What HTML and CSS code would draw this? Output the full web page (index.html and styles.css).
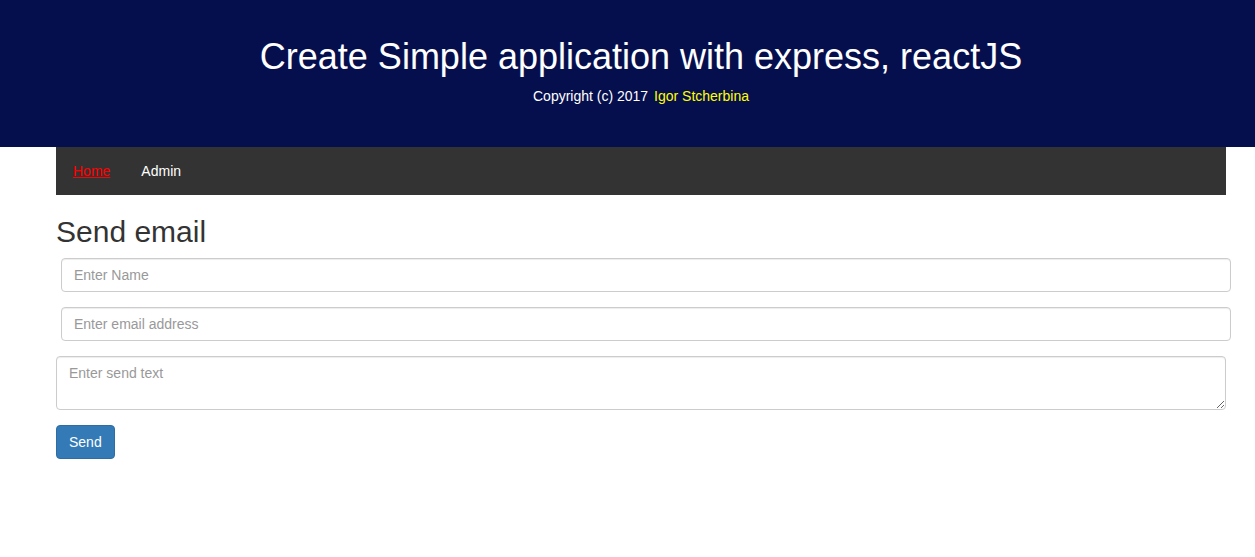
FILE: index.html
```html
<!DOCTYPE html>
<html>
<head>
<meta charset="utf-8">
<link rel="stylesheet" href="styles.css">
</head>
<body>
<header class="hero">
  <h1 class="hero-title">Create Simple application with express, reactJS</h1>
  <p class="hero-copy">Copyright (c) 2017 <a class="author" href="#">Igor Stcherbina</a></p>
</header>
<div class="container">
  <nav class="navbar">
    <a class="nav-link active" href="#">Home</a>
    <a class="nav-link" href="#">Admin</a>
  </nav>
  <h2 class="page-title">Send email</h2>
  <form class="form">
    <div class="form-group inset">
      <input class="form-control" type="text" placeholder="Enter Name">
    </div>
    <div class="form-group inset">
      <input class="form-control" type="email" placeholder="Enter email address">
    </div>
    <div class="form-group">
      <textarea class="form-control textarea" placeholder="Enter send text"></textarea>
    </div>
    <button class="btn" type="button">Send</button>
  </form>
</div>
</body>
</html>
```
FILE: styles.css
```css
* { box-sizing: border-box; }
body {
  margin: 0;
  font-family: "Liberation Sans", Arial, sans-serif;
  font-size: 14px;
  line-height: 1.42857;
  color: #333;
  background: #fff;
}
.hero {
  background: #060f4e;
  height: 147px;
  padding-top: 37px;
  padding-left: 27px;
  text-align: center;
  color: #fff;
}
.hero-title {
  margin: 0;
  font-size: 36px;
  font-weight: normal;
  line-height: 1.1;
}
.hero-copy {
  margin: 10px 0 0;
  font-size: 14px;
}
.author {
  margin-left: 2px;
  color: #ffff00;
  text-decoration: none;
}
.container {
  width: 1170px;
  margin-left: 56px;
}
.navbar {
  background: #333;
  height: 48px;
  display: flex;
  align-items: center;
  padding-left: 17px;
  padding-top: 2px;
  gap: 31px;
}
.nav-link {
  color: #fff;
  text-decoration: none;
}
.nav-link.active {
  color: #ff0000;
  text-decoration: underline;
}
.page-title {
  margin: 20px 0 10px;
  font-size: 30px;
  font-weight: 500;
  line-height: 1.1;
  color: #333;
}
.form-group { margin-bottom: 15px; }
.form-group.inset { margin-left: 5px; margin-right: -5px; }
.form-control {
  display: block;
  width: 100%;
  height: 34px;
  padding: 6px 12px;
  font-family: inherit;
  font-size: 14px;
  line-height: 1.42857;
  color: #555;
  background: #fff;
  border: 1px solid #ccc;
  border-radius: 4px;
  box-shadow: inset 0 1px 1px rgba(0,0,0,.075);
}
.form-control::placeholder { color: #999; }
.textarea {
  height: 54px;
  padding-top: 7px;
  resize: vertical;
}
.btn {
  display: inline-block;
  height: 34px;
  padding: 7px 12px 5px;
  font-family: inherit;
  font-size: 14px;
  line-height: 1.42857;
  color: #fff;
  background: #337ab7;
  border: 1px solid #2e6da4;
  border-radius: 4px;
}
```
